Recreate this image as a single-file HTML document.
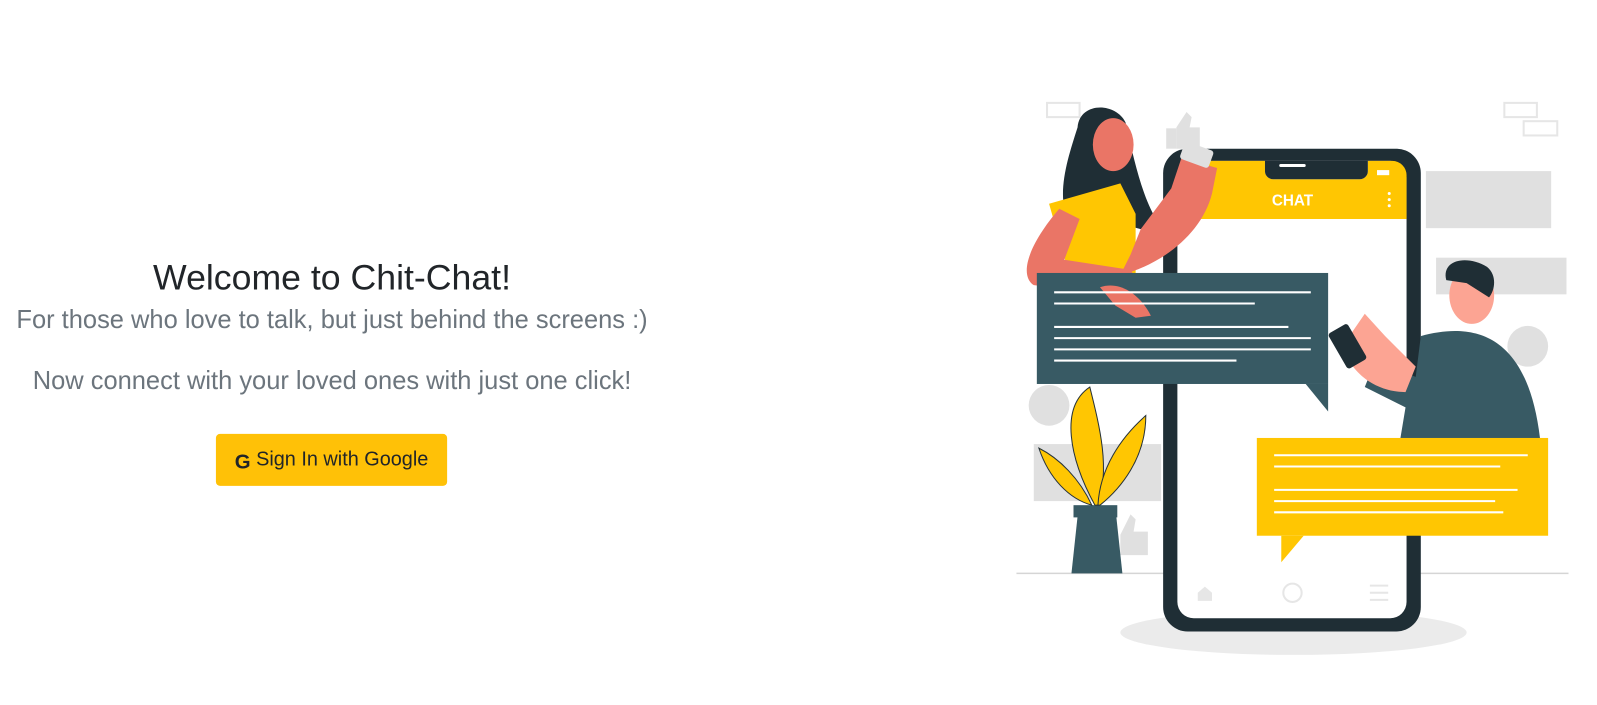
<!DOCTYPE html>
<html><head><meta charset="utf-8"><style>
html,body{margin:0;padding:0;background:#fff;width:1597px;height:705px;overflow:hidden;font-family:"Segoe UI","Liberation Sans",sans-serif}
#w{position:absolute;left:0;top:0;width:1568px;height:692px;transform:scale(1.0185);transform-origin:0 0}
h1{position:absolute;left:0;width:652px;top:251px;margin:0;font-size:35px;font-weight:500;color:#212529;line-height:44px;text-align:center}
.p1{position:absolute;left:0;width:652px;top:299px;font-size:25px;color:#6c757d;line-height:30px;text-align:center}
.p2{position:absolute;left:0;width:652px;top:359px;font-size:25px;color:#6c757d;line-height:30px;text-align:center}
.btn{position:absolute;left:212px;top:426px;width:227px;height:51px;background:#ffc107;border-radius:4px;font-size:19.5px;color:#212529;line-height:51px;text-align:center}
svg{position:absolute;left:0;top:0}
</style></head><body><div id="w">
<h1>Welcome to Chit-Chat!</h1>
<div class="p1">For those who love to talk, but just behind the screens :)</div>
<div class="p2">Now connect with your loved ones with just one click!</div>
<div class="btn"><b style="font-size:20px;position:relative;top:3px">G</b> Sign In with Google</div>
<svg width="1568" height="692" viewBox="0 0 1568 692">
<g fill="none" stroke="#e6e6e6" stroke-width="2">
<rect x="1028" y="101" width="32" height="14"/><rect x="1477" y="101" width="32" height="14"/><rect x="1496" y="119" width="33" height="14"/>
</g>
<g fill="#e0e0e0">
<rect x="1400" y="168" width="123" height="56"/><rect x="1410" y="253" width="128" height="36"/>
<rect x="1015" y="436" width="125" height="56"/><circle cx="1030" cy="398" r="20"/><circle cx="1500" cy="340" r="20"/>
<rect x="1145" y="126" width="10" height="20"/><path d="M1155 146 L1155 125 L1165 110 L1170 115 L1168 125 L1178 125 L1178 146Z"/>
<path d="M1100 545 L1100 525 L1110 505 L1115 510 L1113 522 L1127 522 L1127 545Z"/>
</g>
<line x1="998" y1="563" x2="1540" y2="563" stroke="#d5d5d5" stroke-width="1.5"/>
<ellipse cx="1270" cy="621" rx="170" ry="22" fill="#ebebeb"/>
<rect x="1142" y="146" width="253" height="474" rx="24" fill="#1f2e35"/>
<rect x="1156" y="158" width="225" height="449" rx="16" fill="#fff"/>
<path d="M1156 215 V172 a14 14 0 0 1 14 -14 H1242 v10 a8 8 0 0 0 8 8 h85 a8 8 0 0 0 8 -8 v-10 H1367 a14 14 0 0 1 14 14 V215Z" fill="#ffc602"/>
<path d="M1242 158 v10 a8 8 0 0 0 8 8 h85 a8 8 0 0 0 8 -8 v-10Z" fill="#1f2e35"/>
<rect x="1256" y="161" width="26" height="3" rx="1.5" fill="#fff"/>
<text x="1269" y="202" fill="#fff" font-size="15" font-family="Liberation Sans,sans-serif" text-anchor="middle" font-weight="bold">CHAT</text>
<g fill="#fff"><circle cx="1364" cy="190" r="1.5"/><circle cx="1364" cy="196" r="1.5"/><circle cx="1364" cy="202" r="1.5"/><rect x="1352" y="167" width="12" height="5"/></g>
<g fill="none" stroke="#e6e6e6" stroke-width="2"><circle cx="1269" cy="582" r="9"/><path d="M1345 575h18M1345 582h18M1345 589h18"/></g>
<path d="M1176 590v-8l7-6 7 6v8z" fill="#e6e6e6"/>
<path d="M1058 507 h38 l6 56 h-50z" fill="#385a64"/><rect x="1054" y="496" width="43" height="12" fill="#385a64"/>
<path d="M1075 496 C1050 450 1040 400 1070 380 C1080 420 1090 460 1078 496Z" fill="#ffc602" stroke="#263238" stroke-width="1"/>
<path d="M1078 496 C1080 460 1100 430 1125 408 C1125 450 1100 480 1080 496Z" fill="#ffc602" stroke="#263238" stroke-width="1"/>
<path d="M1072 496 C1060 470 1040 450 1020 440 C1030 470 1050 490 1072 496Z" fill="#ffc602" stroke="#263238" stroke-width="1"/>
<path d="M1058 125 C1060 100 1095 100 1105 120 C1112 150 1120 190 1135 215 L1120 225 L1045 205 C1040 180 1050 150 1058 125Z" fill="#1f2e35"/>
<ellipse cx="1093" cy="142" rx="20" ry="26" fill="#ea7566"/>
<path d="M1030 200 L1100 180 L1115 210 L1115 270 L1050 270 Z" fill="#ffc602"/>
<path d="M1040 205 C1010 240 1000 270 1015 280 L1100 290 L1125 310 L1130 295 L1110 265 L1045 255 L1060 215Z" fill="#ea7566"/>
<path d="M1100 270 C1140 260 1180 230 1190 190 L1195 165 L1160 155 L1150 185 L1120 225 L1110 250Z" fill="#ea7566"/>
<rect x="1160" y="143" width="30" height="18" rx="3" fill="#e0e0e0" transform="rotate(20 1175 152)"/>
<rect x="1018" y="268" width="286" height="109" fill="#385a64"/>
<path d="M1282 377 H1304 V404Z" fill="#385a64"/>
<path d="M1080 282 C1100 275 1120 290 1130 310 L1115 312 L1095 300Z" fill="#ea7566"/>
<g stroke="#fff" stroke-width="2"><path d="M1035 287H1287M1035 298H1232M1035 321H1265M1035 332H1287M1035 343H1287M1035 354H1214"/></g>
<path d="M1395 330 C1450 315 1500 330 1512 430 H1375 L1380 400 L1340 380 L1350 355 L1390 370Z" fill="#385a64"/>
<ellipse cx="1445" cy="290" rx="22" ry="28" fill="#fca493"/>
<path d="M1420 275 C1415 255 1440 250 1460 262 C1470 270 1468 285 1462 292 L1440 278Z" fill="#1f2e35"/>
<path d="M1318 340 C1330 375 1360 385 1380 385 L1390 360 L1360 330 L1340 308Z" fill="#fca493"/>
<rect x="1312" y="320" width="22" height="40" rx="3" fill="#1f2e35" transform="rotate(-30 1323 340)"/>
<rect x="1234" y="430" width="286" height="96" fill="#ffc602"/>
<path d="M1258 526 H1280 L1258 552Z" fill="#ffc602"/>
<g stroke="#fff" stroke-width="2"><path d="M1251 447H1500M1251 458H1473M1251 481H1490M1251 492H1468M1251 503H1476"/></g>
</svg>
</div></body></html>
